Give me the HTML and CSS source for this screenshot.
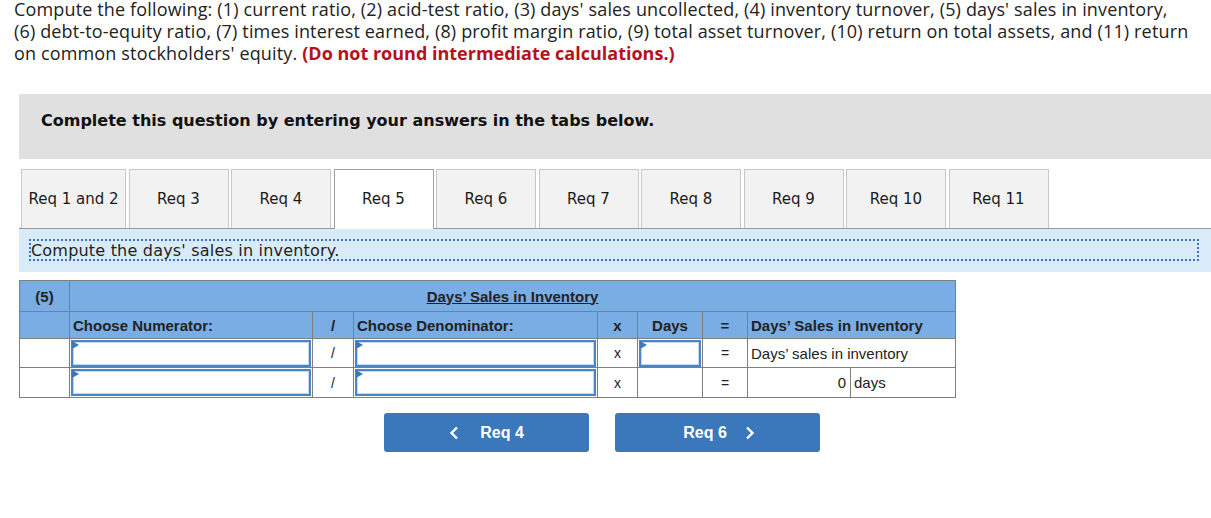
FILE: index.html
```html
<!DOCTYPE html>
<html>
<head>
<meta charset="utf-8">
<link rel="stylesheet" href="styles.css">
</head>
<body>
<div class="page">
  <p class="prompt">Compute the following: (1) current ratio, (2) acid-test ratio, (3) days' sales uncollected, (4) inventory turnover, (5) days' sales in inventory, (6) debt-to-equity ratio, (7) times interest earned, (8) profit margin ratio, (9) total asset turnover, (10) return on total assets, and (11) return on common stockholders' equity. <strong class="warn">(Do not round intermediate calculations.)</strong></p>

  <div class="notice">Complete this question by entering your answers in the tabs below.</div>

  <div class="tabs">
    <div class="tab first">Req 1 and 2</div>
    <div class="tab">Req 3</div>
    <div class="tab">Req 4</div>
    <div class="tab active">Req 5</div>
    <div class="tab">Req 6</div>
    <div class="tab">Req 7</div>
    <div class="tab">Req 8</div>
    <div class="tab">Req 9</div>
    <div class="tab">Req 10</div>
    <div class="tab">Req 11</div>
  </div>

  <div class="panel">
    <div class="instr">Compute the days' sales in inventory.</div>
  </div>

  <table class="grid">
    <colgroup>
      <col class="c1"><col class="c2"><col class="c3"><col class="c4"><col class="c5"><col class="c6"><col class="c7"><col class="c8"><col class="c9">
    </colgroup>
    <tr class="h1">
      <th class="lbl">(5)</th>
      <th colspan="8" class="title"><span>Days’ Sales in Inventory</span></th>
    </tr>
    <tr class="h2">
      <th></th>
      <th class="left">Choose Numerator:</th>
      <th>/</th>
      <th class="left">Choose Denominator:</th>
      <th>x</th>
      <th>Days</th>
      <th>=</th>
      <th colspan="2" class="left">Days’ Sales in Inventory</th>
    </tr>
    <tr class="r">
      <td></td>
      <td class="inp"><div class="box"></div></td>
      <td class="op">/</td>
      <td class="inp"><div class="box"></div></td>
      <td class="op">x</td>
      <td class="inp"><div class="box"></div></td>
      <td class="op">=</td>
      <td colspan="2" class="txt">Days’ sales in inventory</td>
    </tr>
    <tr class="r r4">
      <td></td>
      <td class="inp"><div class="box"></div></td>
      <td class="op">/</td>
      <td class="inp"><div class="box"></div></td>
      <td class="op">x</td>
      <td></td>
      <td class="op">=</td>
      <td class="num">0</td>
      <td class="txt">days</td>
    </tr>
  </table>

  <div class="nav">
    <button class="btn prev"><svg width="10" height="14" viewBox="0 0 10 14"><path d="M8 1.5 L2.5 7 L8 12.5" fill="none" stroke="#fff" stroke-width="2.4"/></svg><span>Req 4</span></button>
    <button class="btn next"><span>Req 6</span><svg width="10" height="14" viewBox="0 0 10 14"><path d="M2 1.5 L7.5 7 L2 12.5" fill="none" stroke="#fff" stroke-width="2.4"/></svg></button>
  </div>
</div>
</body>
</html>
```

FILE: styles.css
```css
html, body { margin: 0; padding: 0; background: #fff; }
.page { padding: 0 0 0 19px; }

.prompt {
  margin: -2px 0 0 -5px;
  font-family: "Open Sans", "Liberation Sans", sans-serif;
  font-size: 18px;
  letter-spacing: 0.15px;
  line-height: 22px;
  color: #222;
  width: 1176px;
}
.warn { color: #b5121b; font-weight: 700; letter-spacing: 0; }

.notice {
  margin-top: 30px;
  height: 65px;
  background: #e0e0e0;
  font-family: "DejaVu Sans", Verdana, sans-serif;
  font-weight: bold;
  font-size: 16px;
  color: #111;
  padding: 17px 0 0 22px;
  box-sizing: border-box;
}

.tabs {
  display: flex;
  gap: 2.5px;
  margin-top: 10px;
  padding-left: 2px;
  height: 59px;
  position: relative;
  z-index: 1;
}
.tab {
  width: 100px;
  height: 60px;
  box-sizing: border-box;
  border: 1px solid #c8c8c8;
  border-bottom: none;
  background: #f2f2f2;
  font-family: "DejaVu Sans", Verdana, sans-serif;
  font-size: 15px;
  color: #1a1a1a;
  display: flex;
  align-items: center;
  justify-content: center;
  padding-bottom: 1px;
}
.tab.first { width: 105px; }
.tab:not(.active) { height: 59px; }
.tab.active {
  background: #fff;
  border-color: #a0a0a0;
}

.panel {
  border-top: 1px solid #999;
  background: #d9ebf9;
  height: 44px;
  padding: 10px 12px 0 10px;
  box-sizing: border-box;
}
.instr {
  border: 2px dotted #3a76c0;
  height: 22px;
  box-sizing: border-box;
  font-family: "DejaVu Sans", Verdana, sans-serif;
  font-size: 16px;
  letter-spacing: 0.2px;
  line-height: 18px;
  padding-top: 1px;
  color: #222;
}

.grid {
  margin-top: 8px;
  border-collapse: collapse;
  table-layout: fixed;
  width: 936px;
  font-family: "Liberation Sans", Arial, sans-serif;
  font-size: 15px;
  color: #222;
  border: 1px solid #7f7f7f;
}
.c1 { width: 50px; }
.c2 { width: 243px; }
.c3 { width: 41px; }
.c4 { width: 244px; }
.c5 { width: 40px; }
.c6 { width: 65px; }
.c7 { width: 45px; }
.c8 { width: 103px; }
.c9 { width: 105px; }

.grid th, .grid td {
  border: 1px solid #7f7f7f;
  padding: 0;
}
.grid th {
  background: #79ade3;
  font-weight: bold;
  text-align: center;
}
.grid th.left { text-align: left; padding-left: 3px; }
.h1 { height: 31px; }
.h1 .title span { text-decoration: underline; }
.h2 { height: 27px; }
.r { height: 29px; }
.r4 { height: 30px; }
.grid td.op { text-align: center; font-size: 14px; }
.grid td.txt { padding-left: 3px; }
.grid td.num { text-align: right; padding-right: 4px; }
.grid td.inp { padding: 1px 1px 0 1px; vertical-align: top; }
.box {
  height: 27px;
  box-sizing: border-box;
  border: 2px solid #4a84c8;
  background: #fff;
  position: relative;
  outline: 1px solid #c5d9f0;
  outline-offset: -3px;
}
.box::before {
  content: "";
  position: absolute;
  left: -1px;
  top: -1px;
  border-left: 7px solid #3b77bb;
  border-top: 4px solid transparent;
  border-bottom: 4px solid transparent;
}

.nav {
  display: flex;
  gap: 26px;
  margin-top: 15px;
  padding-left: 365px;
}
.btn {
  width: 205px;
  height: 39px;
  border: none;
  border-radius: 3px;
  background: #3a77bb;
  color: #fff;
  font-family: "Liberation Sans", Arial, sans-serif;
  font-weight: bold;
  font-size: 16px;
  display: flex;
  align-items: center;
  justify-content: center;
  gap: 20px;
  padding: 0;
}
.btn.prev { padding-right: 0; gap: 21px; }
.btn.next { padding-left: 3px; gap: 18px; }
```
